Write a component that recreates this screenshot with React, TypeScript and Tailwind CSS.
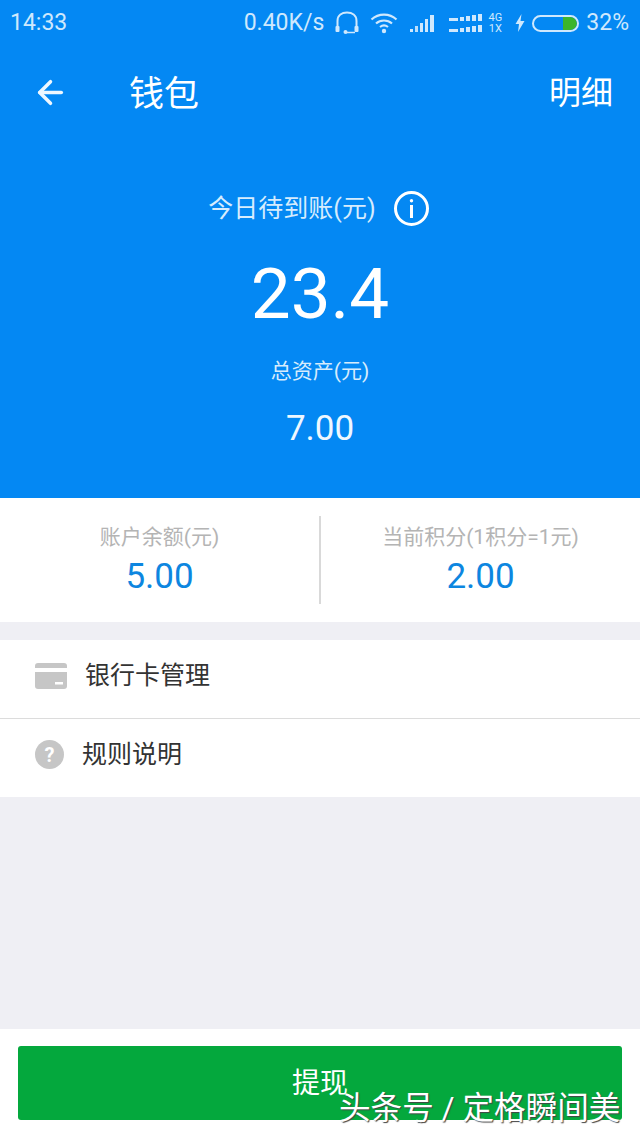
import React from 'react';
import { ArrowLeft } from 'lucide-react';

const FONT = 'font-[Roboto,"Noto_Sans_CJK_SC",sans-serif]';

function StatusIcons() {
  return (
    <div className="flex items-center">
      {/* headphones */}
      <svg width="26" height="26" viewBox="0 0 26 26" fill="none" className="ml-[10px]">
        <path d="M3.5 19 V11 C3.5 5 8 2.5 13 2.5 C18 2.5 22.5 5 22.5 11 V19" stroke="#cfe8fd" strokeWidth="2" />
        <rect x="1.5" y="16" width="4" height="6" rx="1" fill="#cfe8fd" />
        <rect x="20.5" y="16" width="4" height="6" rx="1" fill="#cfe8fd" />
        <path d="M12 22.5 H21" stroke="#cfe8fd" strokeWidth="1.5" />
        <circle cx="11.5" cy="22" r="2" fill="#cfe8fd" />
      </svg>
      {/* wifi */}
      <svg width="28" height="22" viewBox="0 0 28 22" fill="none" className="ml-[10px]">
        <path d="M1.5 7.5 C8.5 1 19.5 1 26.5 7.5" stroke="#cfe8fd" strokeWidth="2.2" />
        <path d="M6 11.5 C10.5 7.5 17.5 7.5 22 11.5" stroke="#cfe8fd" strokeWidth="2.2" />
        <path d="M10 15 C12.5 13 15.5 13 18 15" stroke="#cfe8fd" strokeWidth="2.2" />
        <circle cx="14" cy="19" r="2.2" fill="#cfe8fd" />
      </svg>
      {/* signal 1 */}
      <svg width="28" height="20" viewBox="0 0 28 20" className="ml-[11px]" fill="#cfe8fd">
        <rect x="1" y="16" width="3" height="3" />
        <rect x="6" y="13" width="3" height="6" opacity="0.9" />
        <rect x="11" y="10" width="3" height="9" />
        <rect x="16" y="6" width="3" height="13" />
        <rect x="21" y="2" width="4" height="17" />
      </svg>
      {/* signal 2 */}
      <svg width="34" height="20" viewBox="0 0 34 20" className="ml-[12px]" fill="#cfe8fd">
        <rect x="0" y="5" width="9" height="3" />
        <rect x="11" y="4" width="4" height="4" />
        <rect x="17" y="3" width="4" height="5" />
        <rect x="23" y="2" width="4" height="6" />
        <rect x="29" y="1" width="4" height="7" />
        <rect x="0" y="16" width="9" height="3" />
        <rect x="11" y="15" width="4" height="4" />
        <rect x="17" y="14" width="4" height="5" />
        <rect x="23" y="13" width="4" height="6" />
        <rect x="29" y="12" width="4" height="7" />
      </svg>
      <div className="ml-[5px] flex w-[14px] flex-col items-center text-[11px] leading-[11px] text-[#cfe8fd]">
        <span>4G</span>
        <span>1X</span>
      </div>
      {/* charging bolt */}
      <svg width="10" height="18" viewBox="0 0 10 18" className="ml-[13px]" fill="#cfe8fd">
        <path d="M6.5 0 L0.5 10 H4 L3 18 L9.5 7 H5.5 Z" />
      </svg>
      {/* battery */}
      <div className="ml-[7px] flex h-[17px] w-[47px] items-center justify-end overflow-hidden rounded-full border-[2px] border-[#cfe8fd]">
        <div className="h-full w-[14px] rounded-r-full bg-[#3cb52c]" />
      </div>
    </div>
  );
}

function StatusBar() {
  return (
    <div className="flex h-[45px] items-center justify-between pl-[10px] pr-[11px] pt-[1px] text-[23px] text-[#cfe8fd]">
      <span>14:33</span>
      <div className="flex items-center">
        <span>0.40K/s</span>
        <StatusIcons />
        <span className="ml-[7px]">32%</span>
      </div>
    </div>
  );
}

function Stat({ label, value }: { label: string; value: string }) {
  return (
    <div className="flex flex-1 flex-col items-center pb-[2px]">
      <span className="text-[21px] leading-[30px] text-[#b4b4b4]">{label}</span>
      <span className="mt-[5px] text-[35px] leading-[40px] text-[#0d86e0]">{value}</span>
    </div>
  );
}

export default function App() {
  return (
    <div className={`relative flex h-[1138px] w-[640px] flex-col overflow-hidden bg-[#efeff4] ${FONT}`}>
      {/* Blue header */}
      <div className="flex h-[498px] flex-col bg-[#0488f3] text-white">
        <StatusBar />
        <div className="flex h-[95px] items-center pl-[32px] pr-[27px]">
          <ArrowLeft size={37} strokeWidth={2.3} className="text-[#eef7ff]" />
          <span className="ml-[60px] pt-[3px] text-[35px] leading-none">钱包</span>
          <span className="ml-auto text-[32px] leading-none">明细</span>
        </div>
        <div className="mt-[48px] flex items-center justify-center pr-[3px] text-[25px] leading-[40px] text-[#d6ecfd]">
          <span className="pt-[1px]">今日待到账(元)</span>
          <span className="ml-[18px] flex h-[35px] w-[35px] items-center justify-center rounded-full border-[3px] border-white">
            <svg width="5" height="19" viewBox="0 0 5 19" fill="white">
              <rect x="0.8" y="0" width="3.4" height="3.4" rx="1.7" />
              <rect x="1" y="6" width="3" height="13" />
            </svg>
          </span>
        </div>
        <div className="mt-[25px] text-center text-[71px] leading-[80px]">23.4</div>
        <div className="mt-[22px] text-center text-[21px] leading-[30px] text-[#d6ecfd]">总资产(元)</div>
        <div className="mt-[21px] text-center text-[35px] leading-[44px] text-[#eef7ff]">7.00</div>
      </div>

      {/* Balances */}
      <div className="flex h-[124px] items-center bg-white">
        <div className="flex h-[88px] w-full items-center">
          <Stat label="账户余额(元)" value="5.00" />
          <div className="h-full w-[2px] bg-[#d9d9d9]" />
          <Stat label="当前积分(1积分=1元)" value="2.00" />
        </div>
      </div>

      {/* Menu */}
      <div className="mt-[18px] bg-white">
        <div className="flex h-[79px] items-center border-b border-[#dcdcdc] pb-[6px] pl-[35px]">
          <svg width="32" height="26" viewBox="0 0 32 26" fill="#c6c6c6">
            <path d="M0 3 a3 3 0 0 1 3-3 H29 a3 3 0 0 1 3 3 V5 H0 Z" />
            <path d="M0 9 H32 V23 a3 3 0 0 1-3 3 H3 a3 3 0 0 1-3-3 Z" />
            <rect x="20" y="19" width="8" height="2.5" fill="#ffffff" />
          </svg>
          <span className="ml-[18px] text-[25px] text-[#333333]">银行卡管理</span>
        </div>
        <div className="flex h-[78px] items-center pb-[7px] pl-[35px]">
          <span className="flex h-[29px] w-[29px] items-center justify-center rounded-full bg-[#c6c6c6] text-[20px] font-bold leading-none text-white">?</span>
          <span className="ml-[18px] text-[25px] text-[#333333]">规则说明</span>
        </div>
      </div>

      <div className="flex-1" />

      {/* Footer action */}
      <div className="flex h-[109px] items-start bg-white px-[18px] pt-[17px]">
        <button className="flex h-[74px] w-full items-center justify-center rounded-[3px] bg-[#04a83d] pt-[2px] text-[28px] text-white">
          提现
        </button>
      </div>

      {/* Watermark */}
      <span className="absolute left-[339px] top-[1088px] whitespace-nowrap text-[31.6px] leading-[42px] text-white [text-shadow:1px_1px_1px_#444]">
        头条号 / 定格瞬间美
      </span>
    </div>
  );
}
